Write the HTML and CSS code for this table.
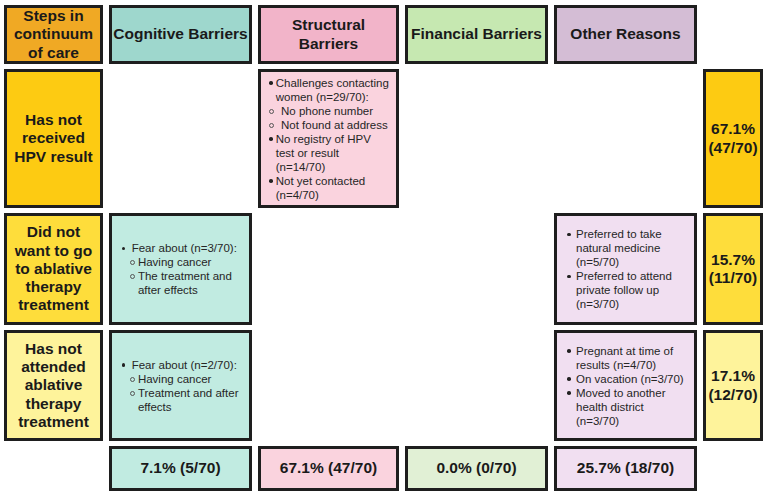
FILE: index.html
```html
<!DOCTYPE html>
<html>
<head>
<meta charset="utf-8">
<link rel="stylesheet" href="styles.css">
</head>
<body>
<div class="chart">
  <div class="box title c-steps-h">Steps in<br>continuum<br>of care</div>
  <div class="box title c-cog-h nowrap">Cognitive Barriers</div>
  <div class="box title c-str-h">Structural<br>Barriers</div>
  <div class="box title c-fin-h nowrap">Financial Barriers</div>
  <div class="box title c-oth-h nowrap">Other Reasons</div>
  <div class="empty"></div>

  <div class="box title c-row1">Has not<br>received<br>HPV result</div>
  <div class="empty"></div>
  <div class="box list c-str str">
    <ul>
      <li><span class="dot"></span><span>Challenges contacting<br>women (n=29/70):</span></li>
      <li class="sub"><span class="ring"></span><span>No phone number</span></li>
      <li class="sub"><span class="ring"></span><span>Not found at address</span></li>
      <li><span class="dot"></span><span>No registry of HPV<br>test or result<br>(n=14/70)</span></li>
      <li><span class="dot"></span><span>Not yet contacted<br>(n=4/70)</span></li>
    </ul>
  </div>
  <div class="empty"></div>
  <div class="empty"></div>
  <div class="box title c-row1">67.1%<br>(47/70)</div>

  <div class="box title c-row2">Did not<br>want to go<br>to ablative<br>therapy<br>treatment</div>
  <div class="box list c-cog cog">
    <ul>
      <li><span class="dot"></span><span>Fear about (n=3/70):</span></li>
      <li class="sub"><span class="ring"></span><span>Having cancer</span></li>
      <li class="sub"><span class="ring"></span><span>The treatment and<br>after effects</span></li>
    </ul>
  </div>
  <div class="empty"></div>
  <div class="empty"></div>
  <div class="box list c-oth oth">
    <ul>
      <li><span class="dot"></span><span>Preferred to take<br>natural medicine<br>(n=5/70)</span></li>
      <li><span class="dot"></span><span>Preferred to attend<br>private follow up<br>(n=3/70)</span></li>
    </ul>
  </div>
  <div class="box title c-row2">15.7%<br>(11/70)</div>

  <div class="box title c-row3">Has not<br>attended<br>ablative<br>therapy<br>treatment</div>
  <div class="box list c-cog cog">
    <ul>
      <li><span class="dot"></span><span>Fear about (n=2/70):</span></li>
      <li class="sub"><span class="ring"></span><span>Having cancer</span></li>
      <li class="sub"><span class="ring"></span><span>Treatment and after<br>effects</span></li>
    </ul>
  </div>
  <div class="empty"></div>
  <div class="empty"></div>
  <div class="box list c-oth oth">
    <ul>
      <li><span class="dot"></span><span>Pregnant at time of<br>results (n=4/70)</span></li>
      <li><span class="dot"></span><span>On vacation (n=3/70)</span></li>
      <li><span class="dot"></span><span>Moved to another<br>health district<br>(n=3/70)</span></li>
    </ul>
  </div>
  <div class="box title c-row3">17.1%<br>(12/70)</div>

  <div class="empty"></div>
  <div class="box title c-cog nowrap">7.1% (5/70)</div>
  <div class="box title c-str nowrap">67.1% (47/70)</div>
  <div class="box title c-fin nowrap">0.0% (0/70)</div>
  <div class="box title c-oth nowrap">25.7% (18/70)</div>
  <div class="empty"></div>
</div>
</body>
</html>
```

FILE: styles.css
```css
html, body {
  margin: 0;
  padding: 0;
  background: #ffffff;
}

body {
  font-family: "Liberation Sans", Arial, sans-serif;
  color: #1a1a1a;
}

.chart {
  display: grid;
  grid-template-columns: 99px 143px 141px 143px 143px 60px;
  grid-template-rows: 59px 139px 112px 111px 45px;
  column-gap: 6px;
  row-gap: 5px;
  padding: 5px 0 0 4px;
}

.box {
  box-sizing: border-box;
  border: 3px solid #1e1e1e;
  display: flex;
  align-items: center;
  justify-content: center;
}

.title {
  font-weight: bold;
  font-size: 15.5px;
  line-height: 18.3px;
  text-align: center;
}

.nowrap {
  white-space: nowrap;
}

.list {
  justify-content: flex-start;
  font-size: 11.5px;
  line-height: 14px;
  color: #262626;
}

.list ul {
  margin: 0;
  padding: 0;
  list-style: none;
}

.list li {
  display: flex;
}

.dot,
.ring {
  flex: none;
  display: flex;
  align-items: center;
  height: 14px;
  padding-top: 1px;
  box-sizing: border-box;
}

.dot::before {
  content: "";
  width: 3.5px;
  height: 3.5px;
  border-radius: 50%;
  background: #222;
}

.ring::before {
  content: "";
  width: 3px;
  height: 3px;
  border-radius: 50%;
  border: 0.8px solid #555;
}

/* per-box marker spacing */
.str { padding-left: 8px; }
.str .dot { width: 6.7px; }
.str .sub { padding-left: 0.4px; }
.str .ring { width: 11.6px; }

.cog { padding-left: 9.5px; }
.cog .dot { width: 10.2px; }
.cog .sub { padding-left: 8.9px; }
.cog .ring { width: 7.5px; }

.oth { padding-left: 10.2px; }
.oth .dot { width: 8.8px; }

/* colours */
.c-steps-h { background: #f0a924; }
.c-cog-h { background: #9ed7cd; }
.c-str-h { background: #f2b4c9; }
.c-fin-h { background: #c6e8b1; }
.c-oth-h { background: #d4bdd5; }

.c-row1 { background: #fdcb12; }
.c-row2 { background: #fedd3b; }
.c-row3 { background: #fef39b; }

.c-cog { background: #c1ebe1; }
.c-str { background: #fad3de; }
.c-fin { background: #e1f0d5; }
.c-oth { background: #f1dff1; }
```
